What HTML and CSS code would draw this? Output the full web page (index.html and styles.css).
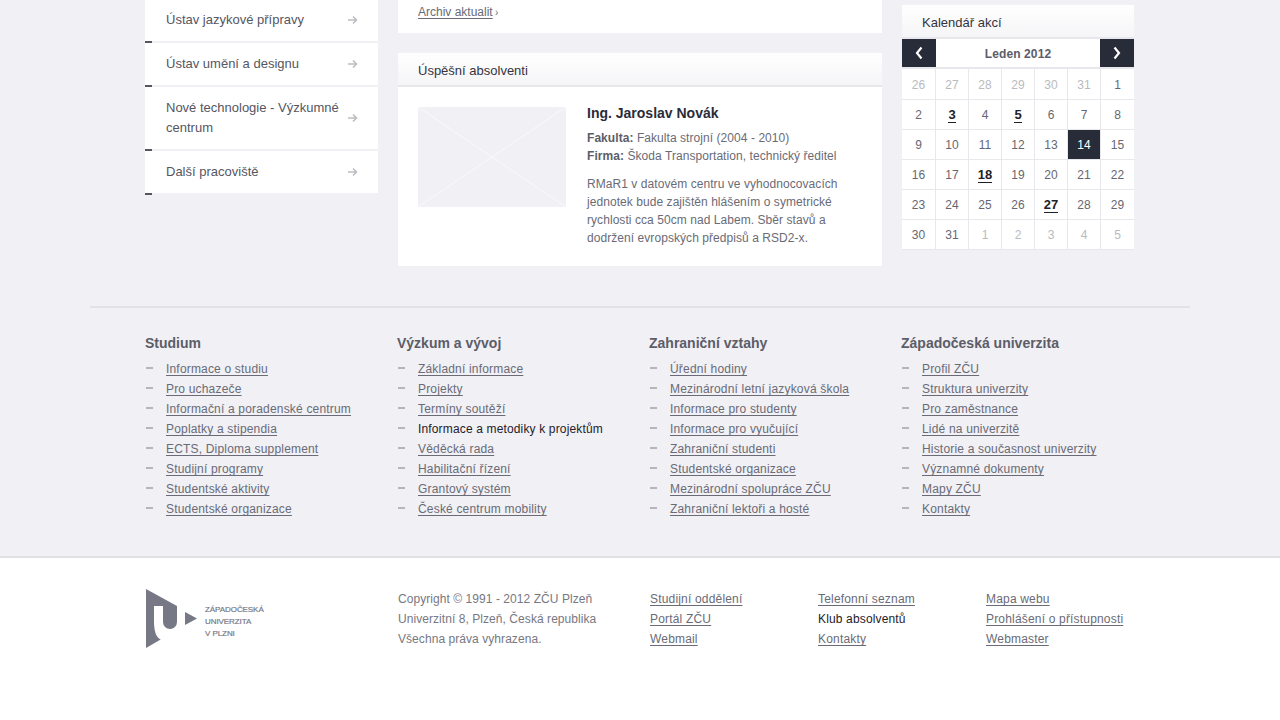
FILE: index.html
```html
<!DOCTYPE html>
<html lang="cs">
<head>
<meta charset="utf-8">
<title>ZČU</title>
<link rel="stylesheet" href="styles.css">
</head>
<body>
<main class="columns">
  <nav class="side">
    <a class="side-item first"><span>Ústav jazykové přípravy</span><svg class="arrow" viewBox="0 0 10 10"><path d="M0 5H8M5 1.5L8.5 5L5 8.5" /></svg></a>
    <a class="side-item"><span>Ústav umění a designu</span><svg class="arrow" viewBox="0 0 10 10"><path d="M0 5H8M5 1.5L8.5 5L5 8.5" /></svg></a>
    <a class="side-item tall"><span>Nové technologie - Výzkumné centrum</span><svg class="arrow" viewBox="0 0 10 10"><path d="M0 5H8M5 1.5L8.5 5L5 8.5" /></svg></a>
    <a class="side-item"><span>Další pracoviště</span><svg class="arrow" viewBox="0 0 10 10"><path d="M0 5H8M5 1.5L8.5 5L5 8.5" /></svg></a>
  </nav>
  <section class="middle">
    <div class="news-end"><a class="link plain">Archiv aktualit</a> <span class="chev">›</span></div>
    <article class="grads">
      <h2 class="box-title">Úspěšní absolventi</h2>
      <div class="grad-body">
        <svg class="placeholder" viewBox="0 0 148 100" preserveAspectRatio="none"><path d="M0 0L148 100M148 0L0 100" /></svg>
        <div class="grad-text">
          <h3>Ing. Jaroslav Novák</h3>
          <p><b>Fakulta:</b> Fakulta strojní (2004 - 2010)<br><b>Firma:</b> Škoda Transportation, technický ředitel</p>
          <p>RMaR1 v datovém centru ve vyhodnocovacích jednotek bude zajištěn hlášením o symetrické rychlosti cca 50cm nad Labem. Sběr stavů a dodržení evropských předpisů a RSD2-x.</p>
        </div>
      </div>
    </article>
  </section>
  <aside class="cal">
    <h2 class="box-title">Kalendář akcí</h2>
    <div class="cal-nav">
      <a class="cal-btn"><svg viewBox="0 0 10 14"><path d="M7.5 1.5L3 7L7.5 12.5" /></svg></a>
      <strong>Leden 2012</strong>
      <a class="cal-btn"><svg viewBox="0 0 10 14"><path d="M2.5 1.5L7 7L2.5 12.5" /></svg></a>
    </div>
    <div class="cal-grid">
      <div class="off">26</div><div class="off">27</div><div class="off">28</div><div class="off">29</div><div class="off">30</div><div class="off">31</div><div>1</div>
      <div>2</div><div><a class="ev">3</a></div><div>4</div><div><a class="ev">5</a></div><div>6</div><div>7</div><div>8</div>
      <div>9</div><div>10</div><div>11</div><div>12</div><div>13</div><div class="today">14</div><div>15</div>
      <div>16</div><div>17</div><div><a class="ev">18</a></div><div>19</div><div>20</div><div>21</div><div>22</div>
      <div>23</div><div>24</div><div>25</div><div>26</div><div><a class="ev">27</a></div><div>28</div><div>29</div>
      <div>30</div><div>31</div><div class="off">1</div><div class="off">2</div><div class="off">3</div><div class="off">4</div><div class="off">5</div>
    </div>
  </aside>
</main>

<section class="sitemap">
  <div class="sitemap-cols">
    <div class="sm-col">
      <h4>Studium</h4>
      <ul>
        <li><a class="link">Informace o studiu</a></li>
        <li><a class="link">Pro uchazeče</a></li>
        <li><a class="link">Informační a poradenské centrum</a></li>
        <li><a class="link">Poplatky a stipendia</a></li>
        <li><a class="link">ECTS, Diploma supplement</a></li>
        <li><a class="link">Studijní programy</a></li>
        <li><a class="link">Studentské aktivity</a></li>
        <li><a class="link">Studentské organizace</a></li>
      </ul>
    </div>
    <div class="sm-col">
      <h4>Výzkum a vývoj</h4>
      <ul>
        <li><a class="link">Základní informace</a></li>
        <li><a class="link">Projekty</a></li>
        <li><a class="link">Termíny soutěží</a></li>
        <li><a class="hover">Informace a metodiky k projektům</a></li>
        <li><a class="link">Věděcká rada</a></li>
        <li><a class="link">Habilitační řízení</a></li>
        <li><a class="link">Grantový systém</a></li>
        <li><a class="link">České centrum mobility</a></li>
      </ul>
    </div>
    <div class="sm-col">
      <h4>Zahraniční vztahy</h4>
      <ul>
        <li><a class="link">Úřední hodiny</a></li>
        <li><a class="link">Mezinárodní letní jazyková škola</a></li>
        <li><a class="link">Informace pro studenty</a></li>
        <li><a class="link">Informace pro vyučující</a></li>
        <li><a class="link">Zahraniční studenti</a></li>
        <li><a class="link">Studentské organizace</a></li>
        <li><a class="link">Mezinárodní spolupráce ZČU</a></li>
        <li><a class="link">Zahraniční lektoři a hosté</a></li>
      </ul>
    </div>
    <div class="sm-col">
      <h4>Západočeská univerzita</h4>
      <ul>
        <li><a class="link">Profil ZČU</a></li>
        <li><a class="link">Struktura univerzity</a></li>
        <li><a class="link">Pro zaměstnance</a></li>
        <li><a class="link">Lidé na univerzitě</a></li>
        <li><a class="link">Historie a současnost univerzity</a></li>
        <li><a class="link">Významné dokumenty</a></li>
        <li><a class="link">Mapy ZČU</a></li>
        <li><a class="link">Kontakty</a></li>
      </ul>
    </div>
  </div>
</section>

<footer class="foot">
  <div class="logo">
    <svg class="logo-mark" viewBox="0 0 52 60">
      <path class="lm-gray" d="M1 1L32 18V40L20 49L1 60Z" />
      <path class="lm-white" d="M9 18H18V34A7 7 0 0 0 32 34V53H21Q9 53 9 34Z" />
      <path class="lm-gray" d="M40 24L52 30.5L40 37Z" />
    </svg>
    <div class="logo-text">ZÁPADOČESKÁ<br>UNIVERZITA<br>V PLZNI</div>
  </div>
  <p class="copy">Copyright © 1991 - 2012 ZČU Plzeň<br>Univerzitní 8, Plzeň, Česká republika<br>Všechna práva vyhrazena.</p>
  <ul class="foot-links">
    <li><a class="link">Studijní oddělení</a></li>
    <li><a class="link">Portál ZČU</a></li>
    <li><a class="link">Webmail</a></li>
  </ul>
  <ul class="foot-links">
    <li><a class="link">Telefonní seznam</a></li>
    <li><a class="hover">Klub absolventů</a></li>
    <li><a class="link">Kontakty</a></li>
  </ul>
  <ul class="foot-links">
    <li><a class="link">Mapa webu</a></li>
    <li><a class="link">Prohlášení o přístupnosti</a></li>
    <li><a class="link">Webmaster</a></li>
  </ul>
</footer>
</body>
</html>
```
FILE: styles.css
```css
* { box-sizing: border-box; }
html, body { margin: 0; padding: 0; }
body {
  background: #f0f0f5;
  color: #6a6b76;
  font: 12px/20px "Liberation Sans", Arial, sans-serif;
  height: 720px;
  overflow: hidden;
}
h2, h3, h4, p, ul { margin: 0; padding: 0; }
ul { list-style: none; }

.link {
  color: #6a6b76;
  letter-spacing: .18px;
  text-decoration: underline;
  text-decoration-skip-ink: none;
  text-underline-offset: 2px;
}
.link.plain { letter-spacing: 0; }
.hover { color: #1f2029; letter-spacing: .15px; }

.columns {
  display: flex;
  align-items: flex-start;
  gap: 20px;
  width: 990px;
  height: 306px;
  margin-left: 145px;
}

/* left menu */
.side { width: 233px; flex: none; }
.side-item {
  display: flex;
  align-items: center;
  justify-content: space-between;
  position: relative;
  height: 44px;
  padding: 0 20px 0 21px;
  background: #fff;
  border-bottom: 2px solid #f0f0f5;
  color: #55565f;
  font-size: 13px;
  line-height: 20px;
}
.side-item.first { height: 43px; padding-bottom: 1px; }
.side-item.tall { height: 64px; }
.side-item span { width: 180px; }
.side-item::after {
  content: "";
  position: absolute;
  left: 0;
  bottom: -2px;
  width: 7px;
  height: 2px;
  background: #55565f;
}
.arrow { width: 10px; height: 10px; flex: none; }
.arrow path { fill: none; stroke: #bcbcc2; stroke-width: 1.6; }

/* middle */
.middle { width: 484px; flex: none; }
.news-end {
  height: 33px;
  padding: 2px 20px 0;
  background: #fff;
  margin-bottom: 20px;
}
.chev { color: #6a6b76; font-size: 10px; margin-left: -1px; }
.box-title {
  height: 34px;
  padding: 1px 0 0 20px;
  background: linear-gradient(#fff, #f5f5f7);
  border-bottom: 2px solid #e8e8ec;
  color: #33343f;
  font-size: 13px;
  font-weight: 400;
  line-height: 33px;
}
.grads { background: #fff; height: 213px; }
.grad-body { display: flex; padding: 20px 20px 0; gap: 21px; }
.placeholder { width: 148px; height: 100px; flex: none; background: #f0f0f5; }
.placeholder path { fill: none; stroke: #fafafc; stroke-width: 1; }
.grad-text { width: 255px; margin-top: -1px; line-height: 18px; letter-spacing: .06px; }
.grad-text h3 {
  color: #2a2c38;
  font-size: 14px;
  font-weight: 700;
  line-height: 14px;
  letter-spacing: 0;
  margin-bottom: 9px;
}
.grad-text p { margin-bottom: 10px; }
.grad-text b { color: #5c5d68; }

/* calendar */
.cal { width: 232px; flex: none; padding-top: 5px; }
.cal-nav {
  display: flex;
  justify-content: space-between;
  align-items: flex-start;
  height: 30px;
  background: #fff;
  border-bottom: 2px solid #e8e8ec;
}
.cal-nav strong {
  margin-top: 5px;
  color: #5c5d68;
  font-size: 12px;
  letter-spacing: .1px;
}
.cal-btn {
  display: flex;
  align-items: center;
  justify-content: center;
  width: 34px;
  height: 28px;
  background: #282b38;
}
.cal-btn svg { width: 10px; height: 14px; }
.cal-btn path { fill: none; stroke: #fff; stroke-width: 2.2; }
.cal-grid {
  display: grid;
  grid-template-columns: 34px repeat(6, 33px);
  grid-template-rows: 31px repeat(5, 30px);
  background: #fff;
}
.cal-grid > div {
  display: flex;
  align-items: center;
  justify-content: center;
  padding-top: 1px;
  border-right: 1px solid #e8e8ec;
  border-bottom: 1px solid #e8e8ec;
  color: #666772;
  line-height: 14px;
}
.cal-grid > div:nth-child(-n+7) { padding-top: 2px; }
.cal-grid > div:nth-child(7n) { border-right: 0; }
.cal-grid > .off { color: #b9bac0; }
.cal-grid > .today { background: #282b38; color: #fff; }
.ev {
  color: #1f2029;
  font-size: 13px;
  font-weight: 700;
  line-height: 15px;
  border-bottom: 1px solid #1f2029;
}

/* sitemap */
.sitemap {
  width: 1100px;
  height: 250px;
  margin-left: 90px;
  padding: 25px 0 0 55px;
  border-top: 2px solid #e2e2e8;
}
.sitemap-cols { display: flex; }
.sm-col { width: 252px; flex: none; }
.sm-col h4 {
  color: #5c5d68;
  font-size: 14px;
  font-weight: 700;
  line-height: 20px;
  margin-bottom: 6px;
}
.sm-col li { position: relative; padding-left: 21px; }
.sm-col li::before {
  content: "";
  position: absolute;
  left: 1px;
  top: 8px;
  width: 7px;
  height: 2px;
  background: #b5b6bd;
}

/* footer */
.foot {
  display: flex;
  align-items: flex-start;
  height: 164px;
  padding: 31px 0 0 145px;
  background: #fff;
  border-top: 2px solid #dfdfe4;
}
.logo { display: flex; width: 253px; flex: none; margin-top: -1px; }
.logo-mark { width: 52px; height: 60px; flex: none; }
.lm-gray { fill: #767886; }
.lm-white { fill: #fff; }
.logo-text {
  margin: 16px 0 0 8px;
  color: #767886;
  font-size: 8px;
  font-weight: 400;
  -webkit-text-stroke: .2px #767886;
  line-height: 12px;
  letter-spacing: -.07px;
}
.copy { width: 252px; flex: none; color: #777882; letter-spacing: .06px; }
.foot-links { width: 168px; flex: none; }
```
